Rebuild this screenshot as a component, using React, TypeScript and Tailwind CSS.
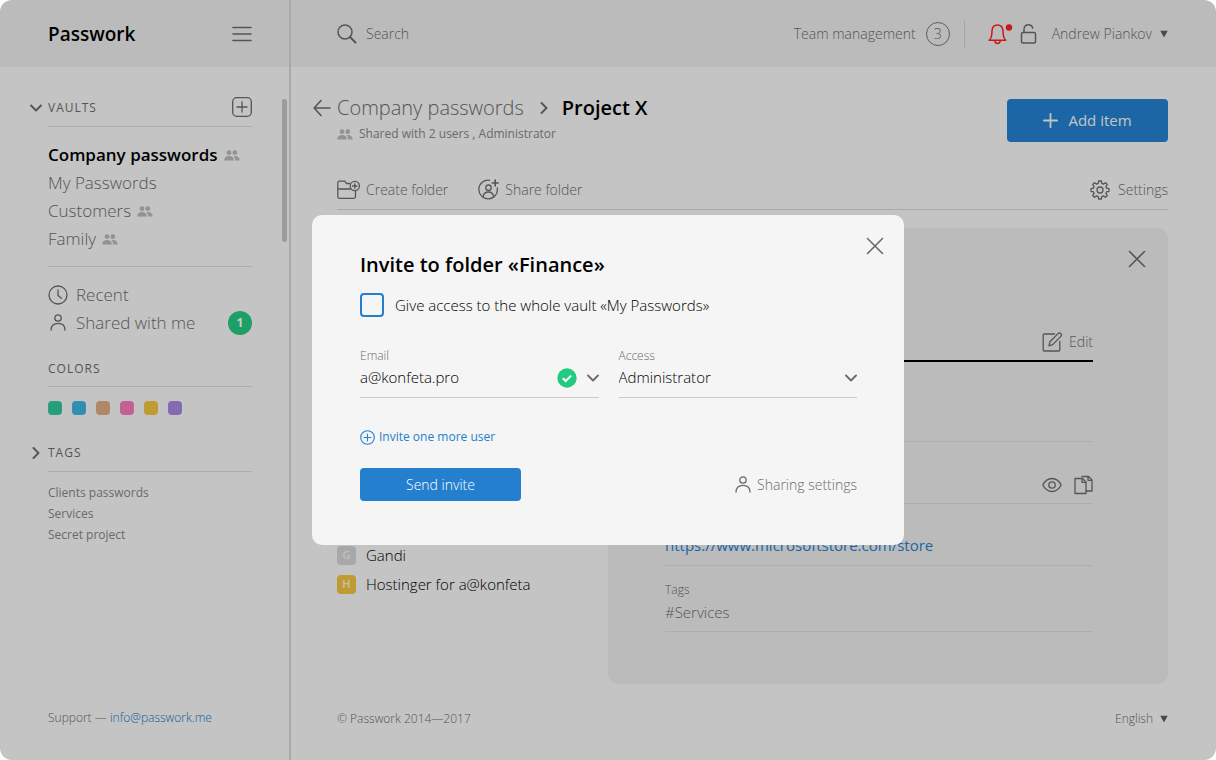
import { useState } from "react"
import type { ReactNode } from "react"

const vaults = [
    { name: "Company passwords", shared: true, active: true },
    { name: "My Passwords", shared: false, active: false },
    { name: "Customers", shared: true, active: false },
    { name: "Family", shared: true, active: false },
]

const colors = [
    { name: "Green", className: "bg-[#33c69d]" },
    { name: "Blue", className: "bg-[#3fb2e0]" },
    { name: "Brown", className: "bg-[#dcab83]" },
    { name: "Pink", className: "bg-[#f57ab9]" },
    { name: "Yellow", className: "bg-[#f0c240]" },
    { name: "Purple", className: "bg-[#a586de]" },
]

const tags = ["Clients passwords", "Services", "Secret project"]

const passwords = [
    { letter: "G", name: "Gandi", className: "bg-[#d3d3d3] text-[#f0f0f0]" },
    { letter: "H", name: "Hostinger for a@konfeta", className: "bg-[#f0c240] text-[#fbf3dc]" },
]

function Icon({ w, h, children, className = "" }: { w: number; h: number; children: ReactNode; className?: string }) {
    return (
        <svg
            width={w}
            height={h}
            viewBox={`0 0 ${w} ${h}`}
            fill="none"
            stroke="currentColor"
            strokeWidth="1.3"
            strokeLinecap="round"
            strokeLinejoin="round"
            className={`shrink-0 ${className}`}
            aria-hidden="true"
        >
            {children}
        </svg>
    )
}

function UsersIcon() {
    return (
        <svg width="16" height="11" viewBox="0 0 16 11" fill="currentColor" className="shrink-0 text-[#b8b8b8]" aria-hidden="true">
            <circle cx="5" cy="2.7" r="2.4" />
            <circle cx="10.8" cy="2.7" r="2.4" />
            <path d="M0.2 10.6C0.2 7.600 2 6 5 6s4.900 1.600 4.900 4.600z" />
            <path d="M9.300 6.100c.5-.1 1-.1 1.500-.1 3 0 4.900 1.600 4.900 4.600h-4.500c0-1.900-.6-3.400-1.900-4.500z" />
        </svg>
    )
}

function PersonIcon() {
    return (
        <Icon w={20} h={20}>
            <circle cx="10" cy="5" r="3.200" />
            <path d="M3 17c0-4.300 2.900-6.700 7-6.700s7 2.400 7 6.700" />
        </Icon>
    )
}

function CloseIcon() {
    return (
        <Icon w={18} h={18}>
            <path d="M1.500 1.500l15 15M16.500 1.500l-15 15" strokeWidth="1.6" />
        </Icon>
    )
}

function ChevronDown() {
    return (
        <Icon w={12} h={12}>
            <path d="M1 3.500l5 5 5-5" strokeWidth="1.900" />
        </Icon>
    )
}

function ChevronRight() {
    return (
        <Icon w={12} h={12}>
            <path d="M3.500 1l5 5-5 5" strokeWidth="1.900" />
        </Icon>
    )
}

function Caret() {
    return (
        <svg width="8" height="8" viewBox="0 0 8 8" className="shrink-0 fill-[#5c5c5c]" aria-hidden="true">
            <path d="M0.300 0.800h7.400L4 7.600z" />
        </svg>
    )
}

function Sidebar() {
    return (
        <aside className="flex w-[291px] shrink-0 flex-col border-r-2 border-[#d4d4d4]">
            {/* Logo */}
            <div className="flex h-[67px] items-center justify-between bg-[#eaeaea] pl-12 pr-[37px]">
                <h1 className="text-[19px] font-semibold leading-8 text-black">Passwork</h1>
                <button type="button" aria-label="Menu">
                    <Icon w={20} h={18}>
                        <path d="M1 2.500h18M1 9h18M1 15.500h18" strokeWidth="1.6" />
                    </Icon>
                </button>
            </div>
            <div className="flex flex-1 pt-[30px]">
                <nav className="flex-1 pl-[30px]">
                    {/* Vaults */}
                    <div className="flex h-[29px] items-start">
                        <button type="button" className="flex h-[22px] items-center gap-1.5 text-xs font-normal tracking-[1px]">
                            <ChevronDown />
                            VAULTS
                        </button>
                        <button type="button" aria-label="Add vault" className="ml-auto">
                            <Icon w={20} h={20}>
                                <rect x="0.700" y="0.700" width="18.600" height="18.600" rx="4" />
                                <path d="M10 5v10M5 10h10" />
                            </Icon>
                        </button>
                    </div>
                    <div className="ml-[18px]">
                        <ul className="border-y border-[#dadada] pb-[13px] pt-3.5">
                            {vaults.map((vault) => (
                                <li key={vault.name} className="flex h-7 items-center gap-1.5 text-[17px]">
                                    <a href="#" className={vault.active ? "font-semibold text-black" : ""}>
                                        {vault.name}
                                    </a>
                                    {vault.shared && <UsersIcon />}
                                </li>
                            ))}
                        </ul>
                        <ul className="pt-3.5">
                            <li className="flex h-7 items-center text-[17px]">
                                <a href="#" className="flex items-center gap-2">
                                    <Icon w={20} h={20}>
                                        <circle cx="10" cy="10" r="9" />
                                        <path d="M10 5v5.500l3.500 2.700" />
                                    </Icon>
                                    Recent
                                </a>
                            </li>
                            <li className="flex h-7 items-center justify-between text-[17px]">
                                <a href="#" className="flex items-center gap-2">
                                    <PersonIcon />
                                    Shared with me
                                </a>
                                <span className="flex size-6 items-center justify-center rounded-full bg-[#23c983] text-xs font-bold text-white">1</span>
                            </li>
                        </ul>
                        {/* Colors */}
                        <h2 className="mt-6 h-[25px] text-xs font-normal tracking-[1px]">COLORS</h2>
                        <div className="flex gap-2.5 border-t border-[#dadada] pt-3.5">
                            {colors.map((color) => (
                                <button key={color.name} type="button" aria-label={color.name} className={`size-3.5 rounded-sm ${color.className}`} />
                            ))}
                        </div>
                    </div>
                    {/* Tags */}
                    <button type="button" className="mt-[30px] flex h-4 items-center gap-1.5 text-xs font-normal tracking-[1px]">
                        <ChevronRight />
                        TAGS
                    </button>
                    <ul className="ml-[18px] mt-2.5 border-t border-[#dadada] pt-2.5">
                        {tags.map((tag) => (
                            <li key={tag} className="text-xs font-normal leading-[21px] text-[#858585]">
                                <a href="#">{tag}</a>
                            </li>
                        ))}
                    </ul>
                </nav>
                {/* Scrollbar */}
                <div className="ml-[30px] mr-0.5 mt-0.5 h-[143px] w-[5px] rounded-full bg-[#c3c3c3]" />
            </div>
            <p className="pb-[34px] pl-12 text-xs leading-4">
                Support — <a href="mailto:info@passwork.me" className="text-[#1672c4]">info@passwork.me</a>
            </p>
        </aside>
    )
}

function Header() {
    return (
        <header className="flex h-[67px] items-center justify-between bg-[#eaeaea] pl-[46px] pr-12 text-sm">
            <label className="flex items-center gap-[9px]">
                <Icon w={20} h={20}>
                    <circle cx="8" cy="8" r="7" strokeWidth="1.5" />
                    <path d="M13 13l5.500 5.500" strokeWidth="2" />
                </Icon>
                <input type="search" aria-label="Search" placeholder="Search" className="w-60 bg-transparent outline-none placeholder:text-[#6b6b6b]" />
            </label>
            <div className="flex items-center">
                <a href="#">Team management</a>
                <span className="ml-2.5 flex size-6 items-center justify-center rounded-full border border-[#747474]">3</span>
                <span className="ml-3.5 h-7 w-px bg-[#cfcfcf]" />
                <button type="button" aria-label="Notifications" className="ml-[23px] text-[#fa2020]">
                    <Icon w={26} h={22}>
                        <path d="M1.200 17.200h16.600c-1.700-1.500-2.300-2.800-2.500-5.200l-.3-4.200C14.700 4.200 12.500 2 9.500 2S4.300 4.200 4 7.800L3.700 12c-.2 2.400-.8 3.700-2.500 5.200z" strokeWidth="1.500" />
                        <path d="M6.800 17.800c.3 1.800 1.300 2.700 2.700 2.700s2.400-.9 2.700-2.700" strokeWidth="1.500" />
                        <circle cx="21" cy="4.500" r="3.200" fill="currentColor" stroke="none" />
                    </Icon>
                </button>
                <button type="button" aria-label="Lock" className="ml-1.5">
                    <Icon w={18} h={22}>
                        <rect x="1.500" y="9.500" width="14" height="10.500" rx="1.500" strokeWidth="1.500" />
                        <path d="M4 9.500V6.200C4 3.500 5.800 1.800 8.300 1.800c2.300 0 3.900 1.200 4.400 3.200" strokeWidth="1.500" />
                    </Icon>
                </button>
                <button type="button" className="ml-3.5 flex items-center gap-2">
                    Andrew Piankov
                    <Caret />
                </button>
            </div>
        </header>
    )
}

function Toolbar() {
    return (
        <div className="ml-6 flex h-10 items-center border-b border-[#d4d4d4] text-sm">
            <button type="button" className="flex items-center gap-1.5">
                <Icon w={23} h={20}>
                    <path d="M12.500 3.500H9.500L7.800 1.200H2.500C1.500 1.200.8 2 .8 3v13.500c0 1 .7 1.800 1.700 1.800h14.300c1 0 1.700-.8 1.700-1.800v-5M.8 9H13.500" />
                    <circle cx="17.800" cy="6" r="4.600" />
                    <path d="M17.800 3.800v4.400M15.600 6H20" />
                </Icon>
                Create folder
            </button>
            <button type="button" className="ml-[30px] flex items-center gap-1.5">
                <Icon w={21} h={21}>
                    <path d="M11.500 1.300A9.300 9.300 0 1 0 19.300 9" />
                    <circle cx="10.500" cy="8.700" r="2.700" />
                    <path d="M5 18.200c.3-3.400 2.300-5.200 5.500-5.200s4.900 1.800 5.200 5.200" />
                    <path d="M17.200 1v6M14.200 4h6" strokeWidth="1.600" />
                </Icon>
                Share folder
            </button>
            <button type="button" className="ml-auto flex items-center gap-2">
                <Icon w={20} h={20}>
                    <circle cx="10" cy="10" r="3" />
                    <path d="M8.700 1h2.600l.5 2.400 1.600.7 2.100-1.400 1.800 1.800-1.400 2.100.7 1.600 2.400.5v2.600l-2.400.5-.7 1.600 1.400 2.100-1.800 1.800-2.100-1.400-1.600.7-.5 2.400H8.700l-.5-2.400-1.600-.7-2.100 1.400-1.800-1.800 1.400-2.100-.7-1.600L1 11.300V8.700l2.400-.5.7-1.600-1.400-2.100 1.800-1.800 2.100 1.400 1.600-.7z" />
                </Icon>
                Settings
            </button>
        </div>
    )
}

function Details() {
    return (
        <section className="w-[560px] rounded-[10px] bg-[#eaeaea] pb-[52px] pl-[57px] pr-[22px] pt-[22px]">
            <div className="flex justify-end">
                <button type="button" aria-label="Close item">
                    <CloseIcon />
                </button>
            </div>
            <div className="mr-[53px]">
                <div className="flex h-[94px] items-end justify-end border-b-2 border-black pb-2">
                    <button type="button" className="flex items-center gap-1.5 text-sm">
                        <Icon w={21} h={20}>
                            <path d="M12.500 2H2.200c-.6 0-1 .4-1 1v15c0 .6.400 1 1 1h14.600c.6 0 1-.4 1-1V9.500" />
                            <path d="M7 13.800l.9-4L16 1.600c.8-.8 2-.8 2.800 0s.8 2 0 2.800l-8.100 8.200z" />
                        </Icon>
                        Edit
                    </button>
                </div>
                <div className="h-20 border-b border-[#dadada]" />
                <div className="flex h-[62px] items-end justify-end gap-3 border-b border-[#dadada] pb-2">
                    <button type="button" aria-label="Show password">
                        <Icon w={20} h={20}>
                            <path d="M.8 10c2.200-4.300 5.400-6.500 9.200-6.500s7 2.200 9.200 6.500c-2.200 4.300-5.400 6.500-9.200 6.500S3 14.300.8 10z" />
                            <circle cx="10" cy="10" r="3.200" />
                        </Icon>
                    </button>
                    <button type="button" aria-label="Copy password">
                        <Icon w={19} h={20}>
                            <path d="M1 3.500h7.500L12 7v11.500H1z" />
                            <path d="M8 3.500V7.300h4M8 1.500h6.500L18 5v11h-6M14 1.500V5.300h4" />
                        </Icon>
                    </button>
                </div>
                <div className="flex h-[62px] items-end border-b border-[#dadada] pb-2 text-[15px] font-normal leading-6">
                    <a href="https://www.microsoftstore.com/store" className="text-[#2480cf]">
                        https://www.microsoftstore.com/store
                    </a>
                </div>
                <div className="flex h-[66px] flex-col justify-end border-b border-[#dadada] pb-[7px]">
                    <span className="text-xs leading-5">Tags</span>
                    <span className="text-[15px] leading-6">#Services</span>
                </div>
            </div>
        </section>
    )
}

function InviteDialog() {
    const [wholeVault, setWholeVault] = useState(false)
    const [email, setEmail] = useState("a@konfeta.pro")
    const [access, setAccess] = useState("Administrator")

    return (
        <div className="absolute inset-0 flex items-center justify-center bg-black/20">
            <form
                role="dialog"
                aria-labelledby="invite-title"
                onSubmit={(e) => e.preventDefault()}
                className="relative w-[592px] rounded-[10px] bg-[#f5f5f5] pb-11 pl-12 pr-[47px] pt-9"
            >
                <button type="button" aria-label="Close" className="absolute right-5 top-[22px]">
                    <CloseIcon />
                </button>
                <h2 id="invite-title" className="text-xl font-semibold text-black">Invite to folder «Finance»</h2>
                <label className="mt-3.5 flex h-6 items-center gap-[11px] text-[15px] text-black">
                    <input
                        type="checkbox"
                        checked={wholeVault}
                        onChange={(e) => setWholeVault(e.target.checked)}
                        className="size-6 appearance-none rounded border-2 border-[#2480cf] checked:bg-[#2480cf]"
                    />
                    Give access to the whole vault «My Passwords»
                </label>
                <div className="mt-[31px] grid grid-cols-2 gap-5">
                    <div>
                        <label htmlFor="email" className="block text-xs">Email</label>
                        <div className="flex h-[34px] items-center border-b border-[#cbcbcb] pb-1.5">
                            <input
                                id="email"
                                type="text"
                                value={email}
                                onChange={(e) => setEmail(e.target.value)}
                                className="min-w-0 flex-1 bg-transparent text-[15px] text-black outline-none"
                            />
                            <svg width="20" height="20" viewBox="0 0 20 20" fill="none" className="shrink-0" aria-hidden="true">
                                <circle cx="10" cy="10" r="9.700" fill="#23cb80" />
                                <path d="M5.800 10.200l2.900 2.800 5.400-5.400" stroke="#fff" strokeWidth="2" />
                            </svg>
                            <button type="button" aria-label="Show contacts" className="ml-2.5">
                                <ChevronDown />
                            </button>
                        </div>
                    </div>
                    <div>
                        <label htmlFor="access" className="block text-xs">Access</label>
                        <div className="flex h-[34px] items-center border-b border-[#cbcbcb] pb-1.5">
                            <select
                                id="access"
                                value={access}
                                onChange={(e) => setAccess(e.target.value)}
                                className="min-w-0 flex-1 appearance-none bg-transparent text-[15px] text-black outline-none"
                            >
                                <option>Administrator</option>
                            </select>
                            <ChevronDown />
                        </div>
                    </div>
                </div>
                <button type="button" className="mt-[29px] flex h-5 items-center gap-1 text-xs font-normal text-[#2480cf]">
                    <Icon w={15} h={15}>
                        <circle cx="7.500" cy="7.500" r="6.800" strokeWidth="1.100" />
                        <path d="M7.500 4v7M4 7.500h7" strokeWidth="1.100" />
                    </Icon>
                    Invite one more user
                </button>
                <div className="mt-[21px] flex items-center justify-between">
                    <button type="submit" className="h-[33px] w-[161px] rounded bg-[#2480cf] text-sm text-white">
                        Send invite
                    </button>
                    <button type="button" className="flex items-center gap-1 text-sm">
                        <PersonIcon />
                        Sharing settings
                    </button>
                </div>
            </form>
        </div>
    )
}

export default function App() {
    return (
        <div className="relative flex min-h-screen overflow-hidden rounded-xl bg-[#f5f5f5] font-['Open_Sans',sans-serif] font-light text-[#6b6b6b]">
            <Sidebar />
            <div className="flex min-w-0 flex-1 flex-col">
                <Header />
                <main className="flex-1 pl-[22px] pr-12 pt-[26px]">
                    <div className="flex h-[77px] items-start justify-between">
                        <div>
                            {/* Breadcrumbs */}
                            <div className="flex h-[30px] items-center text-xl leading-7">
                                <button type="button" aria-label="Back">
                                    <Icon w={18} h={18}>
                                        <path d="M17 9H1.500M8 1.500L1.200 9 8 16.500" strokeWidth="1.600" />
                                    </Icon>
                                </button>
                                <a href="#" className="ml-1.5 mr-3.5">Company passwords</a>
                                <ChevronRight />
                                <h2 className="ml-3 font-semibold text-black">Project X</h2>
                            </div>
                            <p className="ml-6 flex items-center gap-1.5 text-xs font-normal leading-[22px] text-[#858585]">
                                <UsersIcon />
                                Shared with 2 users , Administrator
                            </p>
                        </div>
                        <button type="button" className="mt-1.5 flex h-[43px] w-[161px] items-center justify-center gap-2.5 rounded bg-[#2480cf] text-[15px] font-normal text-[#f5f5f5]">
                            <Icon w={15} h={15}>
                                <path d="M7.500 .8v13.400M.8 7.500h13.400" strokeWidth="1.800" />
                            </Icon>
                            Add item
                        </button>
                    </div>
                    <Toolbar />
                    <div className="ml-6 flex justify-between pt-[18px]">
                        {/* Passwords */}
                        <ul className="pt-[313px]">
                            {passwords.map((item) => (
                                <li key={item.name} className="flex h-[29px] items-center gap-2.5 text-[15px] text-black">
                                    <span className={`flex size-[19px] items-center justify-center rounded text-[11px] font-semibold ${item.className}`}>
                                        {item.letter}
                                    </span>
                                    {item.name}
                                </li>
                            ))}
                        </ul>
                        <Details />
                    </div>
                </main>
                <footer className="flex items-center justify-between pb-[33px] pl-[46px] pr-12 text-xs leading-4">
                    <span>© Passwork 2014—2017</span>
                    <label className="flex items-center gap-1.5">
                        <select aria-label="Language" className="appearance-none bg-transparent outline-none">
                            <option>English</option>
                        </select>
                        <Caret />
                    </label>
                </footer>
            </div>
            <InviteDialog />
        </div>
    )
}
